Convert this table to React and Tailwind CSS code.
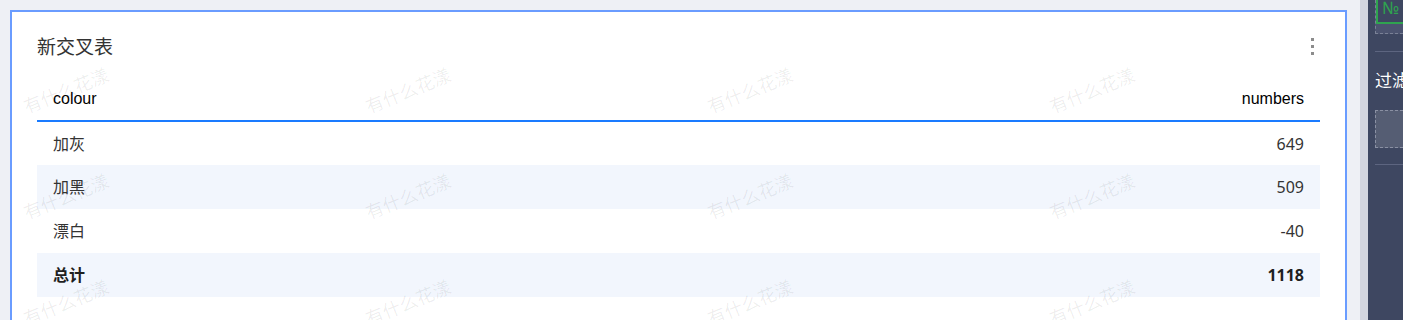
import React from 'react';

const rows = [
  { colour: '加灰', numbers: 649 },
  { colour: '加黑', numbers: 509 },
  { colour: '漂白', numbers: -40 },
];

const total = rows.reduce((sum, r) => sum + r.numbers, 0);

const cjk = { fontFamily: '"Noto Sans", "Noto Sans CJK SC", sans-serif' };
const latin = { fontFamily: '"Liberation Sans", "Noto Sans CJK SC", sans-serif' };

// faint repeated watermark laid over the card
const Watermark = () => {
  const cols = [66, 408, 750, 1092];
  const lines = [90, 196, 302];
  return (
    <div className="pointer-events-none absolute inset-0 overflow-hidden">
      {lines.map((y) =>
        cols.map((x) => (
          <span
            key={`${x}-${y}`}
            className="absolute text-[18px] text-black/[0.07] whitespace-nowrap -rotate-[22deg] -translate-x-1/2 -translate-y-1/2"
            style={{ left: x - 12, top: y - 12, fontFamily: '"Noto Sans CJK SC", sans-serif' }}
          >
            有什么花漾
          </span>
        ))
      )}
    </div>
  );
};

const CrossTable = () => (
  <div className="relative h-full border-2 border-b-0 border-[#6a9cff] bg-white px-[25px] pt-[22px]">
    <div className="flex items-center justify-between h-[26px] mb-[17px]">
      <h2 className="text-[19px] leading-[26px] text-[#333]" style={cjk}>新交叉表</h2>
      <div className="flex flex-col gap-[4px] mr-[6px] mt-[-2px]">
        <span className="block w-[3px] h-[3px] bg-[#8c8c8c]" />
        <span className="block w-[3px] h-[3px] bg-[#8c8c8c]" />
        <span className="block w-[3px] h-[3px] bg-[#8c8c8c]" />
      </div>
    </div>

    <table className="w-full border-collapse text-[16px]">
      <thead>
        <tr className="h-[44px] border-b-2 border-[#1a7bff]">
          <th className="text-left font-normal px-4 text-black" style={latin}>colour</th>
          <th className="text-right font-normal px-4 text-black" style={latin}>numbers</th>
        </tr>
      </thead>
      <tbody style={cjk}>
        {rows.map((r, i) => (
          <tr key={r.colour} className={`h-[44px] ${i % 2 === 1 ? 'bg-[#f2f6fd]' : ''}`}>
            <td className="px-4 text-[#333]">{r.colour}</td>
            <td className="px-4 text-right text-[#333]">{r.numbers}</td>
          </tr>
        ))}
        <tr className="h-[44px] bg-[#f2f6fd] font-bold">
          <td className="px-4 text-[#1f1f1f]">总计</td>
          <td className="px-4 text-right text-[#1f1f1f]">{total}</td>
        </tr>
      </tbody>
    </table>

    <Watermark />
  </div>
);

const SidePanel = () => (
  <div className="w-[35px] bg-[#3e4761] pl-[7px] overflow-hidden" style={cjk}>
    <div className="h-[34px] border border-dashed border-t-0 border-r-0 border-[#7a8196] bg-[#4c5470]">
      <div className="h-[24px] border-2 border-t-0 border-r-0 border-[#2fa44f] bg-[#3e4761] pl-[4px] text-[17px] leading-[16px] text-[#2fa44f]">
        №
      </div>
    </div>
    <div className="mt-[17px] h-px bg-[#5d6580]" />
    <div className="mt-[17px] text-[17px] leading-6 text-white whitespace-nowrap">过滤</div>
    <div className="mt-[17px] h-[38px] border border-dashed border-r-0 border-[#8a90a3] bg-[#555d73]" />
    <div className="mt-[16px] h-px bg-[#5d6580]" />
  </div>
);

export default function App() {
  return (
    <div className="flex h-[320px] w-[1403px] overflow-hidden bg-[#eef0f5]">
      <div className="flex-1 pl-[10px] pr-[13px] pt-[10px]">
        <CrossTable />
      </div>
      <div className="w-[8px] bg-[#d3d6df]" />
      <SidePanel />
    </div>
  );
}
